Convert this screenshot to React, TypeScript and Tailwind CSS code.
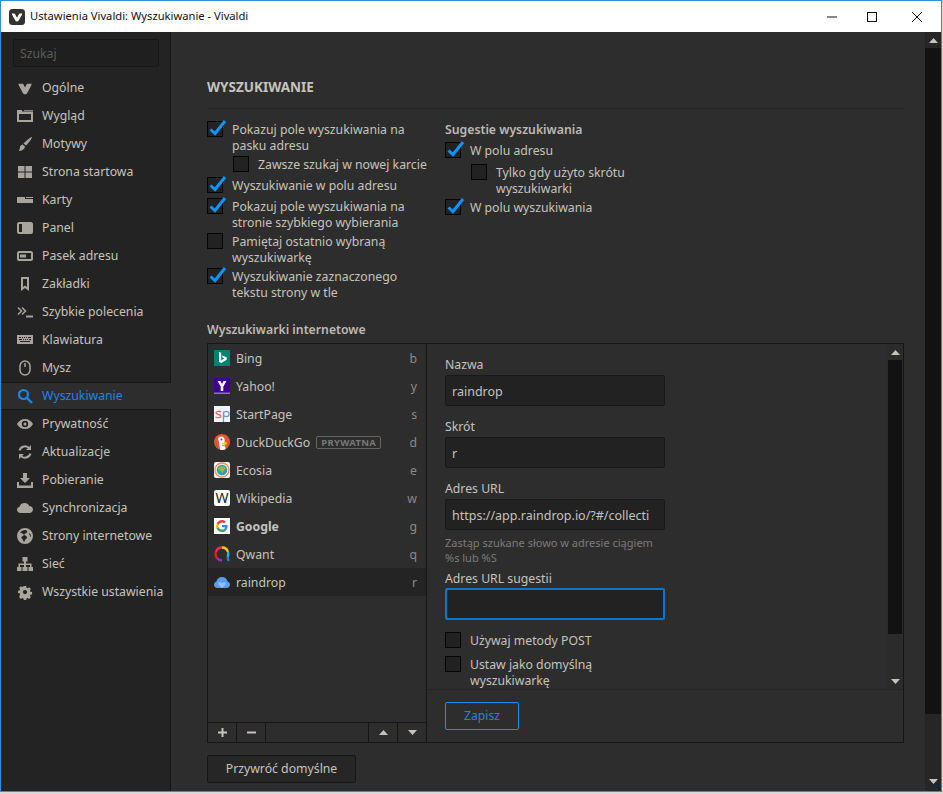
import * as React from "react"

const FONT = "font-['Open_Sans','Noto_Sans',sans-serif]"

const navItems: { label: string; icon: React.ReactNode }[] = [
  { label: "Ogólne", icon: <path transform="translate(1.500 2) scale(.82)" d="M0 2h4.500c1 0 1.400.5 1.800 1.300L8 6.800l1.700-3.500C10.100 2.500 10.500 2 11.500 2H16c0 1-.3 2-.8 3l-4.500 8.500c-.6 1.100-1.500 1.500-2.700 1.500s-2.100-.4-2.700-1.500L.8 5C.3 4 0 3 0 2z" /> },
  { label: "Wygląd", icon: <path fillRule="evenodd" d="M0 2h5v1.500h11V14H0V2zm2 4v6h12V6H2zM7 2h9v.8H7z" /> },
  { label: "Motywy", icon: <path d="M15 1c.5.500-2.500 5-6 8.500L6.500 7.500C10 4 14.500.5 15 1zM5.700 8.500l2.300 2c-.3 2.500-3 4.500-6.500 4.500 1.500-1 1-2.200 1.500-4 .4-1.400 1.500-2.300 2.700-2.500z" /> },
  { label: "Strona startowa", icon: <path d="M1 2h6.500v5.500H1zM8.500 2H15v5.500H8.500zM1 8.500h6.500V14H1zM8.500 8.500H15V14H8.500z" /> },
  { label: "Karty", icon: <path d="M0 5h8v2h8v4H0V5zM9 5h7v1H9z" /> },
  { label: "Panel", icon: <path fillRule="evenodd" d="M2 2h12c1 0 2 1 2 2v8c0 1-1 2-2 2H2c-1 0-2-1-2-2V4c0-1 1-2 2-2zm0 2v8h3V4H2z" /> },
  { label: "Pasek adresu", icon: <path fillRule="evenodd" d="M2 3h12c1 0 2 1 2 2v6c0 1-1 2-2 2H2c-1 0-2-1-2-2V5c0-1 1-2 2-2zm0 2v6h12V5H2zm1 1.500h6v3H3z" /> },
  { label: "Zakładki", icon: <path fillRule="evenodd" d="M4 1h8v14l-4-3-4 3V1zm2 2v8l2-1.500L10 11V3H6z" /> },
  { label: "Szybkie polecenia", icon: <g fill="none" stroke="#a9a59d" strokeWidth="1.500"><path d="M1 3.500l3.500 3.500L1 10.500M5 3.500l3.500 3.500L5 10.500" /><path d="M9 12.500h7" strokeWidth="2" /></g> },
  { label: "Klawiatura", icon: <path fillRule="evenodd" d="M0 3h16v9H0V3zm2 2v1h2V5H2zm3 0v1h1V5H5zm2 0v1h1V5H7zm2 0v1h1V5H9zm2 0v1h3V5h-3zM2 7v1h3V7H2zm4 0v1h1V7H6zm2 0v1h1V7H8zm2 0v1h1V7h-1zm2 0v1h2V7h-2zM3 9v1h10V9H3z" /> },
  { label: "Mysz", icon: <g fill="none" stroke="#a9a59d" strokeWidth="1.500"><rect x="3" y="1" width="10" height="14" rx="5" /><path d="M8 3v4" /></g> },
]

const navItemsAfter: { label: string; icon: React.ReactNode }[] = [
  { label: "Prywatność", icon: <path fillRule="evenodd" d="M8 3c3.500 0 6.500 2 8 5-1.500 3-4.500 5-8 5s-6.500-2-8-5c1.500-3 4.500-5 8-5zm0 1.800A3.200 3.200 0 1 0 8 11.200 3.200 3.200 0 0 0 8 4.800zm0 1.700a1.500 1.500 0 1 1 0 3 1.500 1.500 0 0 1 0-3z" /> },
  { label: "Aktualizacje", icon: <g fill="none" stroke="#a9a59d" strokeWidth="2"><path d="M2.500 6.500A5.700 5.700 0 0 1 12.500 4.500" /><path d="M13.500 9.500A5.700 5.700 0 0 1 3.500 11.500" /><path d="M14 1v5h-5zM2 15v-5h5z" strokeWidth="0" fill="#a9a59d" /></g> },
  { label: "Pobieranie", icon: <path d="M6 1h4v5h3l-5 5-5-5h3V1zM0 10h2v3.500h12V10h2v6H0v-6z" /> },
  { label: "Synchronizacja", icon: <path d="M3.500 13C1.500 13 0 11.600 0 9.800c0-1.500 1-2.700 2.500-3C3 4.500 5 3 7.500 3c2.300 0 4 1.200 4.800 3 2 .1 3.700 1.700 3.700 3.600 0 1.900-1.600 3.400-3.500 3.400h-9z" /> },
  { label: "Strony internetowe", icon: <path fillRule="evenodd" d="M8 0a8 8 0 1 1 0 16A8 8 0 0 1 8 0zM3 4.500c1 .2 1.500 1 2.500 1S7 6.500 6.500 7.500 5 8 4.500 9s1 2 1.500 3 .5 2 1.500 2c-.5-1 1-2.500 2-3.500s.5-2-.5-2.500S7 7 7.500 6s2-.5 2.500-1.500-.5-2-1-2.500C6.800 1.800 4.500 2.800 3 4.500zM12 5c-.5.800.5 1.500 1 2.500s.5 1.500 1 1.500c.3-1.500-.5-3.200-2-4z" /> },
  { label: "Sieć", icon: <path d="M5.500 1h5v4.500H9V7.500h5.500V11H16v4h-4.500v-4H13V9H9v2h1.500v4h-5v-4H7V9H3v2h1.500v4H0v-4h1.500V7.500H7V5.500H5.500V1z" /> },
  { label: "Wszystkie ustawienia", icon: <path fillRule="evenodd" d="M6.600 1h2.800l.4 2 1.300.6 1.800-1.100 2 2-1.100 1.800.5 1.300 2 .4v2.800l-2 .4-.5 1.300 1.100 1.800-2 2-1.800-1.100-1.300.5-.4 2H6.600l-.4-2-1.300-.5-1.800 1.100-2-2L2.200 10.900l-.5-1.300-2-.4V6.600l2-.4.5-1.300L1.100 3.100l2-2 1.800 1.100 1.300-.6.4-1.600zM8 5.500a2.500 2.500 0 1 0 0 5 2.500 2.500 0 0 0 0-5z" transform="translate(1.200 1.200) scale(.85)" /> },
]

function NavRow({ label, icon }: { label: string; icon: React.ReactNode }) {
  return (
    <div className="flex h-[28px] items-center gap-[9px] whitespace-nowrap pl-[16px] text-[#c6c3bc]">
      <svg viewBox="0 0 16 16" width="16" height="16" fill="#a9a59d" className="shrink-0">
        {icon}
      </svg>
      <span>{label}</span>
    </div>
  )
}

function CheckBox({ checked }: { checked?: boolean }) {
  return (
    <span className="relative block h-[16px] w-[16px] shrink-0 border border-[#050505] bg-[#222222]">
      {checked && (
        <svg viewBox="0 0 18 18" width="18" height="18" className="absolute left-[1px] top-[-3px]">
          <path d="M1.500 10.500l4.500 4L16 2" fill="none" stroke="#0e94ff" strokeWidth="3" />
        </svg>
      )}
    </span>
  )
}

function Check({ checked, children, className = "" }: { checked?: boolean; children: React.ReactNode; className?: string }) {
  return (
    <label className={"flex gap-[9px] leading-[16px] text-[#c6c3bc] " + className}>
      <CheckBox checked={checked} />
      <span className="whitespace-nowrap pt-[1px]">{children}</span>
    </label>
  )
}

const engines: { name: string; key: string; icon: React.ReactNode; bold?: boolean; tag?: string; active?: boolean }[] = [
  {
    name: "Bing",
    key: "b",
    icon: (
      <svg viewBox="0 0 16 16" width="16" height="16">
        <rect width="16" height="16" fill="#008373" />
        <path d="M5 2l2.200.8v7.400l3-1.700-1.400-.7-.9-2.200 4.800 1.700v2.500L7.200 13 5 11.800V2z" fill="#fff" />
      </svg>
    ),
  },
  {
    name: "Yahoo!",
    key: "y",
    icon: (
      <svg viewBox="0 0 16 16" width="16" height="16">
        <rect width="16" height="16" fill="#410093" />
        <path d="M3.500 3h3l1.500 3 1.500-3h3L9.300 8.500V13H6.700V8.500z" fill="#fff" />
        <rect y="14.500" width="16" height="1.500" fill="#8f6cd0" />
      </svg>
    ),
  },
  {
    name: "StartPage",
    key: "s",
    icon: (
      <svg viewBox="0 0 16 16" width="16" height="16">
        <rect width="16" height="16" fill="#f1f4fa" />
        <path d="M7 6c-1-1-5-1.200-5 .8C2 9 7 8 7 10.200 7 12 3 12 1.500 11" fill="none" stroke="#e8675f" strokeWidth="1.300" />
        <path d="M9.500 16V5.500M9.500 8c0-3.500 5.500-3.500 5.500 0s-5.500 3.500-5.500 0z" fill="none" stroke="#6f97dc" strokeWidth="1.300" />
      </svg>
    ),
  },
  {
    name: "DuckDuckGo",
    key: "d",
    tag: "PRYWATNA",
    icon: (
      <svg viewBox="0 0 16 16" width="16" height="16">
        <circle cx="8" cy="8" r="8" fill="#de5833" />
        <path d="M5 3c2-1.200 5-.5 5.500 2 .4 2-.2 4 .2 6 .2 1.500 1 3 1 4-1.500 1-4 1.300-5.500.8C5.500 13 5.500 9 4.500 6.500 4 5 4 3.800 5 3z" fill="#fff" />
        <circle cx="7.500" cy="5.500" r="1" fill="#2d4f8e" />
        <path d="M8 9l4.500-1v2.500L8 10.500z" fill="#fdd20a" />
        <path d="M8 11l3.500.5-.2 1L8 12z" fill="#65bc46" />
      </svg>
    ),
  },
  {
    name: "Ecosia",
    key: "e",
    icon: (
      <svg viewBox="0 0 16 16" width="16" height="16">
        <rect width="16" height="16" fill="#f2f2ee" rx="2" />
        <circle cx="8" cy="8" r="7" fill="none" stroke="#f08a6c" strokeWidth="1.300" />
        <circle cx="8" cy="8" r="5.300" fill="#2f9fb5" />
        <path d="M4 6c2-2 5-2.500 7-1 1 1 .5 2.500-1 3-.5 1.500-1 3-2 3.500-.5-1.500-1-2.500-2-3-1 0-2-1-2-2.500z" fill="#9ab83c" />
      </svg>
    ),
  },
  {
    name: "Wikipedia",
    key: "w",
    icon: (
      <span className="flex h-[16px] w-[16px] items-center justify-center rounded-[2px] bg-white font-['Liberation_Serif',serif] text-[14px] leading-none text-[#222]">
        W
      </span>
    ),
  },
  {
    name: "Google",
    key: "g",
    bold: true,
    icon: (
      <svg viewBox="0 0 16 16" width="16" height="16">
        <rect width="16" height="16" fill="#fff" />
        <path d="M13.600 8.100c0-.4 0-.8-.1-1.200H8v2.300h3.200c-.1.700-.6 1.400-1.200 1.800v1.500h1.900c1.100-1 1.700-2.500 1.700-4.400z" fill="#4285f4" />
        <path d="M8 14c1.600 0 2.900-.5 3.900-1.500L10 11c-.5.400-1.200.6-2 .6-1.500 0-2.900-1-3.300-2.400H2.700v1.500C3.700 12.700 5.700 14 8 14z" fill="#34a853" />
        <path d="M4.700 9.200c-.3-.8-.3-1.600 0-2.400V5.300h-2a6 6 0 0 0 0 5.400z" fill="#fbbc05" />
        <path d="M8 4.400c.9 0 1.600.3 2.200.9l1.700-1.700C10.900 2.600 9.600 2 8 2 5.700 2 3.700 3.300 2.700 5.300l2 1.500C5.100 5.400 6.500 4.400 8 4.400z" fill="#ea4335" />
      </svg>
    ),
  },
  {
    name: "Qwant",
    key: "q",
    icon: (
      <svg viewBox="0 0 16 16" width="16" height="16" fill="none" strokeWidth="2.400">
        <path d="M8 1.500A6.300 6.300 0 0 1 14 6" stroke="#f5c518" />
        <path d="M14 6a6.300 6.300 0 0 1-.5 5" stroke="#2fb4d8" />
        <path d="M13.500 11l1 4" stroke="#2f7fd8" />
        <path d="M8 1.500A6.300 6.300 0 0 0 2 6" stroke="#e8324a" />
        <path d="M2 6a6.300 6.300 0 0 0 1 6" stroke="#e0221f" />
        <path d="M3 12a6.300 6.300 0 0 0 5 2.500" stroke="#a02fc0" />
      </svg>
    ),
  },
  {
    name: "raindrop",
    key: "r",
    active: true,
    icon: (
      <svg viewBox="0 0 16 16" width="16" height="16">
        <path d="M3.500 14C1.500 14 0 12.500 0 10.700c0-1.500 1-2.700 2.400-3.100C3 5 5.300 3 8 3c2.700 0 5 2 5.600 4.600 1.400.4 2.400 1.600 2.400 3.100 0 1.800-1.500 3.300-3.500 3.300h-9z" fill="#5a9df0" />
        <path d="M8 14L4.500 10.500c-1-1.200.8-3 2.200-2L8 9.500l1.300-1c1.400-1 3.200.8 2.200 2z" fill="#8fc1f7" />
      </svg>
    ),
  },
]

function ToolButton({ children }: { children: React.ReactNode }) {
  return <div className="flex h-full w-[29px] items-center justify-center border-r border-[#161616] text-[#c6c3bc]">{children}</div>
}

function Field({ label, value, focused, className = "" }: { label: string; value?: string; focused?: boolean; className?: string }) {
  return (
    <div className={className}>
      <div className={"h-[16px] leading-[16px] text-[#c6c3bc] " + (focused ? "pt-[2px]" : "pt-[1px]")}>{label}</div>
      <div
        className={
          "mt-[3px] flex w-[220px] items-center overflow-hidden whitespace-nowrap rounded-[2px] bg-[#222222] px-[6px] pt-[4px] text-[12.500px] text-[#c6c3bc] " +
          (focused ? "h-[32px] border-2 border-[#0b76cc]" : "h-[31px] border border-[#191919]")
        }
      >
        {value}
      </div>
    </div>
  )
}

function Arrow({ down }: { down?: boolean }) {
  return (
    <svg viewBox="0 0 9 5" width="9" height="5" fill="#c6c3bc">
      <path d={down ? "M0 0h9L4.500 5z" : "M0 5h9L4.500 0z"} />
    </svg>
  )
}

export default function App() {
  return (
    <div className={"h-[794px] w-[943px] overflow-hidden bg-[#d8d8d8] text-[12.250px] " + FONT}>
      <div className="flex h-[792px] w-[942px] flex-col border border-[#2a8fdc]">
        <div className="flex h-[31px] shrink-0 items-center bg-white pl-[8px]">
          <svg viewBox="0 0 16 16" width="16" height="16">
            <rect width="16" height="16" rx="3.500" fill="#33322f" />
            <path d="M2.800 4.500h2.300c.5 0 .8.300 1 .7L8 8.700l1.900-3.500c.2-.4.500-.7 1-.7h2.300c0 .6-.1 1.100-.4 1.600l-3.100 5.500c-.3.600-.9.900-1.700.9s-1.400-.3-1.700-.9L3.200 6.100c-.3-.5-.4-1-.4-1.600z" fill="#fff" />
          </svg>
          <span className="ml-[5px] text-[11.200px] text-[#111]">Ustawienia Vivaldi: Wyszukiwanie - Vivaldi</span>
          <div className="ml-auto flex items-center">
            <svg viewBox="0 0 10 10" width="10" height="10" className="mr-[30px]">
              <path d="M0 5h10" stroke="#111" strokeWidth="1" />
            </svg>
            <svg viewBox="0 0 10 10" width="10" height="10" className="mr-[35px]">
              <rect x=".5" y=".5" width="9" height="9" fill="none" stroke="#111" />
            </svg>
            <svg viewBox="0 0 10 10" width="10" height="10" className="mr-[19px]">
              <path d="M0 0l10 10M10 0L0 10" stroke="#111" strokeWidth="1" />
            </svg>
          </div>
        </div>

        <div className="flex min-h-0 flex-1">
          {/* sidebar */}
          <nav className="relative w-[170px] shrink-0 bg-[#232323]">
            <div className="h-full border-r border-[#161616]">
              <div className="pb-[7px] pl-[12px] pt-[7px]">
                <div className="flex h-[28px] w-[146px] items-center rounded-[2px] border border-[#171717] bg-[#1f1f1f] px-[6px] pt-[2px] text-[#5c5b57]">Szukaj</div>
              </div>
              {navItems.map((item) => (
                <NavRow key={item.label} {...item} />
              ))}
              <div className="relative z-10 flex h-[28px] w-[170px] items-center gap-[9px] border-y border-[#161616] bg-[#2d2d2d] pl-[16px] text-[#1b87e3]">
                <svg viewBox="0 0 16 16" width="16" height="16" className="shrink-0">
                  <circle cx="6.500" cy="6.500" r="4.500" fill="none" stroke="#1b87e3" strokeWidth="2.200" />
                  <path d="M10 10l5 5" stroke="#1b87e3" strokeWidth="2.400" />
                </svg>
                <span>Wyszukiwanie</span>
              </div>
              {navItemsAfter.map((item) => (
                <NavRow key={item.label} {...item} />
              ))}
            </div>
          </nav>

          {/* main */}
          <main className="flex min-w-0 flex-1 bg-[#2d2d2d]">
            <div className="min-w-0 flex-1 pl-[36px] pr-[21px] pt-[47px]">
              <h1 className="border-b border-[#232323] pb-[12px] text-[13.500px] font-bold uppercase leading-[17px] text-[#c6c3bc]">Wyszukiwanie</h1>

              <div className="mt-[12px] flex">
                <div className="flex w-[238px] flex-col gap-[2px]">
                  <Check checked>
                    Pokazuj pole wyszukiwania na
                    <br />
                    pasku adresu
                  </Check>
                  <Check className="h-[19px] pl-[26px]">Zawsze szukaj w nowej karcie</Check>
                  <Check checked className="h-[19px]">
                    Wyszukiwanie w polu adresu
                  </Check>
                  <Check checked>
                    Pokazuj pole wyszukiwania na
                    <br />
                    stronie szybkiego wybierania
                  </Check>
                  <Check>
                    Pamiętaj ostatnio wybraną
                    <br />
                    wyszukiwarkę
                  </Check>
                  <Check checked>
                    Wyszukiwanie zaznaczonego
                    <br />
                    tekstu strony w tle
                  </Check>
                </div>
                <div className="flex flex-col">
                  <h2 className="pb-[4px] pt-[1px] font-semibold leading-[16px] text-[#bdbab3]">Sugestie wyszukiwania</h2>
                  <Check checked className="h-[22px]">
                    W polu adresu
                  </Check>
                  <Check className="h-[35px] pl-[26px]">
                    Tylko gdy użyto skrótu
                    <br />
                    wyszukiwarki
                  </Check>
                  <Check checked>W polu wyszukiwania</Check>
                </div>
              </div>

              <h2 className="mt-[21px] font-semibold leading-[16px] text-[#bdbab3]">Wyszukiwarki internetowe</h2>

              <div className="mt-[5px] flex h-[400px] border border-[#161616]">
                <div className="flex w-[219px] shrink-0 flex-col border-r border-[#161616]">
                  <div className="min-h-0 flex-1">
                    {engines.map((e) => (
                      <div
                        key={e.name}
                        className={"flex h-[28px] items-center gap-[6px] pl-[6px] pr-[9px] text-[#c6c3bc] " + (e.active ? "bg-[#242424]" : "")}
                      >
                        <span className="block h-[16px] w-[16px] shrink-0">{e.icon}</span>
                        <span className={"pt-[2px] " + (e.bold ? "font-bold" : "")}>{e.name}</span>
                        {e.tag && (
                          <span className="rounded-[2px] border border-[#666] px-[4px] text-[9.500px] font-bold leading-[11px] tracking-[.3px] text-[#777]">{e.tag}</span>
                        )}
                        <span className="ml-auto pt-[2px] text-[#8c8a85]">{e.key}</span>
                      </div>
                    ))}
                  </div>
                  <div className="flex h-[20px] shrink-0 border-t border-[#161616]">
                    <ToolButton>
                      <svg viewBox="0 0 9 9" width="9" height="9"><path d="M0 4.500h9M4.500 0v9" stroke="#c6c3bc" strokeWidth="2" /></svg>
                    </ToolButton>
                    <ToolButton>
                      <svg viewBox="0 0 9 9" width="9" height="9"><path d="M0 4.500h9" stroke="#c6c3bc" strokeWidth="2" /></svg>
                    </ToolButton>
                    <div className="flex-1 border-r border-[#161616]" />
                    <ToolButton><Arrow /></ToolButton>
                    <div className="flex h-full w-[28px] items-center justify-center"><Arrow down /></div>
                  </div>
                </div>

                <div className="flex min-w-0 flex-1 flex-col">
                  <div className="flex h-[346px] shrink-0 border-b border-[#262626]">
                    <div className="min-w-0 flex-1 overflow-hidden pl-[18px] pt-[12px]">
                      <Field label="Nazwa" value="raindrop" />
                      <Field label="Skrót" value="r" className="mt-[12px]" />
                      <Field label="Adres URL" value="https://app.raindrop.io/?#/collecti" className="mt-[12px]" />
                      <p className="mt-[5px] text-[11px] leading-[15px] text-[#7d7b77]">
                        Zastąp szukane słowo w adresie ciągiem
                        <br />
                        %s lub %S
                      </p>
                      <Field label="Adres URL sugestii" focused className="mt-[4px]" />
                      <Check className="mt-[12px]">Używaj metody POST</Check>
                      <Check className="mt-[7px]">
                        Ustaw jako domyślną
                        <br />
                        wyszukiwarkę
                      </Check>
                    </div>
                    <div className="flex w-[16px] shrink-0 flex-col items-center bg-[#2b2b2b]">
                      <div className="flex h-[16px] shrink-0 items-center justify-center"><Arrow /></div>
                      <div className="h-[274px] w-[14px] bg-[#121212]" />
                      <div className="mt-auto flex h-[16px] shrink-0 items-center justify-center"><Arrow down /></div>
                    </div>
                  </div>
                  <div className="pl-[18px] pt-[12px]">
                    <button className="h-[28px] w-[74px] rounded-[2px] border border-[#1a8cff] bg-transparent text-[12.250px] text-[#1b87e3]">Zapisz</button>
                  </div>
                </div>
              </div>

              <button className="mt-[12px] h-[28px] w-[149px] rounded-[2px] border border-[#171717] bg-[#262626] text-[12.250px] text-[#c6c3bc]">Przywróć domyślne</button>
            </div>

            {/* page scrollbar */}
            <div className="flex w-[16px] shrink-0 flex-col items-center bg-[#262626]">
              <div className="flex h-[16px] shrink-0 items-center justify-center"><Arrow /></div>
              <div className="h-[666px] w-full bg-[#121212]" />
              <div className="mb-[2px] mt-auto flex h-[16px] shrink-0 items-center justify-center"><Arrow down /></div>
            </div>
          </main>
        </div>
      </div>
    </div>
  )
}
